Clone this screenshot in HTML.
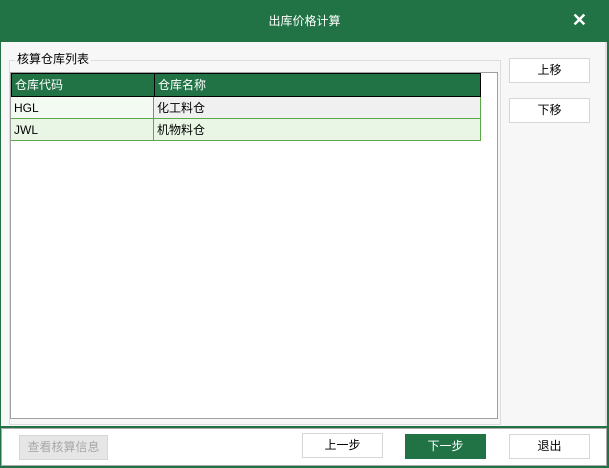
<!DOCTYPE html>
<html><head><meta charset="utf-8"><style>
*{margin:0;padding:0;box-sizing:border-box}
body{width:609px;height:468px;overflow:hidden;background:#217346;font-family:"Liberation Sans","Noto Sans CJK SC",sans-serif;font-size:12px;position:relative;color:#000}
.title{position:absolute;left:0;top:0;width:609px;height:42px;color:#fff;text-align:center;line-height:42px;font-size:12px}
.x{position:absolute;right:22px;top:10px;color:#fff;font-size:18px;font-weight:bold}
.main{position:absolute;left:1px;top:42px;width:606px;height:384px;background:#f7f7f7;border-right:2px solid #e0e0e0}
.grp{position:absolute;left:8px;top:18px;width:492px;height:365px;border:1px solid #ddd}
.leg{position:absolute;left:14px;top:8px;background:#f7f7f7;padding:0 2px;font-size:12px}
.grid{position:absolute;left:10px;top:72px;width:488px;height:347px;background:#fff;border:1px solid #a0a0a0}
.r{position:absolute;left:0;width:470px;height:22px;line-height:22px}
.c{position:absolute;top:0;height:100%;padding-left:3px}
.btn{position:absolute;background:#fff;border:1px solid #d6d6d6;text-align:center;font-size:12px}
.bottom{position:absolute;left:1px;top:428px;width:606px;height:38px;background:#fff;border:1px solid #aaa}
</style></head><body>
<div class="title">出库价格计算</div><div class="x">✕</div>
<div class="main"><div class="grp"></div><div class="leg">核算仓库列表</div></div>
<div class="grid">
<div class="r" style="top:0;height:24px;background:#217346;color:#fff;border:1px solid #000;line-height:22px">
<div class="c" style="left:0;width:143px;border-right:1px solid #000">仓库代码</div><div class="c" style="left:143px">仓库名称</div></div>
<div class="r" style="top:24px;border-bottom:1px solid #5aa84a;border-right:1px solid #5aa84a">
<div class="c" style="left:0;width:143px;background:#f3faf1;border-right:1px solid #5aa84a">HGL</div><div class="c" style="left:143px;width:326px;background:#f0f0f0">化工料仓</div></div>
<div class="r" style="top:46px;background:#e9f6e5;border-bottom:1px solid #5aa84a;border-right:1px solid #5aa84a">
<div class="c" style="left:0;width:143px;border-right:1px solid #5aa84a">JWL</div><div class="c" style="left:143px">机物料仓</div></div>
</div>
<div class="btn" style="left:509px;top:58px;width:81px;height:25px;line-height:23px">上移</div>
<div class="btn" style="left:509px;top:98px;width:81px;height:25px;line-height:23px">下移</div>
<div class="bottom"></div>
<div class="btn" style="left:19px;top:435px;width:89px;height:25px;line-height:23px;background:#e6e6e6;color:#a8a8a8">查看核算信息</div>
<div class="btn" style="left:302px;top:433px;width:81px;height:25px;line-height:23px">上一步</div>
<div class="btn" style="left:405px;top:434px;width:81px;height:25px;line-height:23px;background:#217346;border-color:#217346;color:#fff">下一步</div>
<div class="btn" style="left:509px;top:434px;width:81px;height:25px;line-height:23px">退出</div>
</body></html>
